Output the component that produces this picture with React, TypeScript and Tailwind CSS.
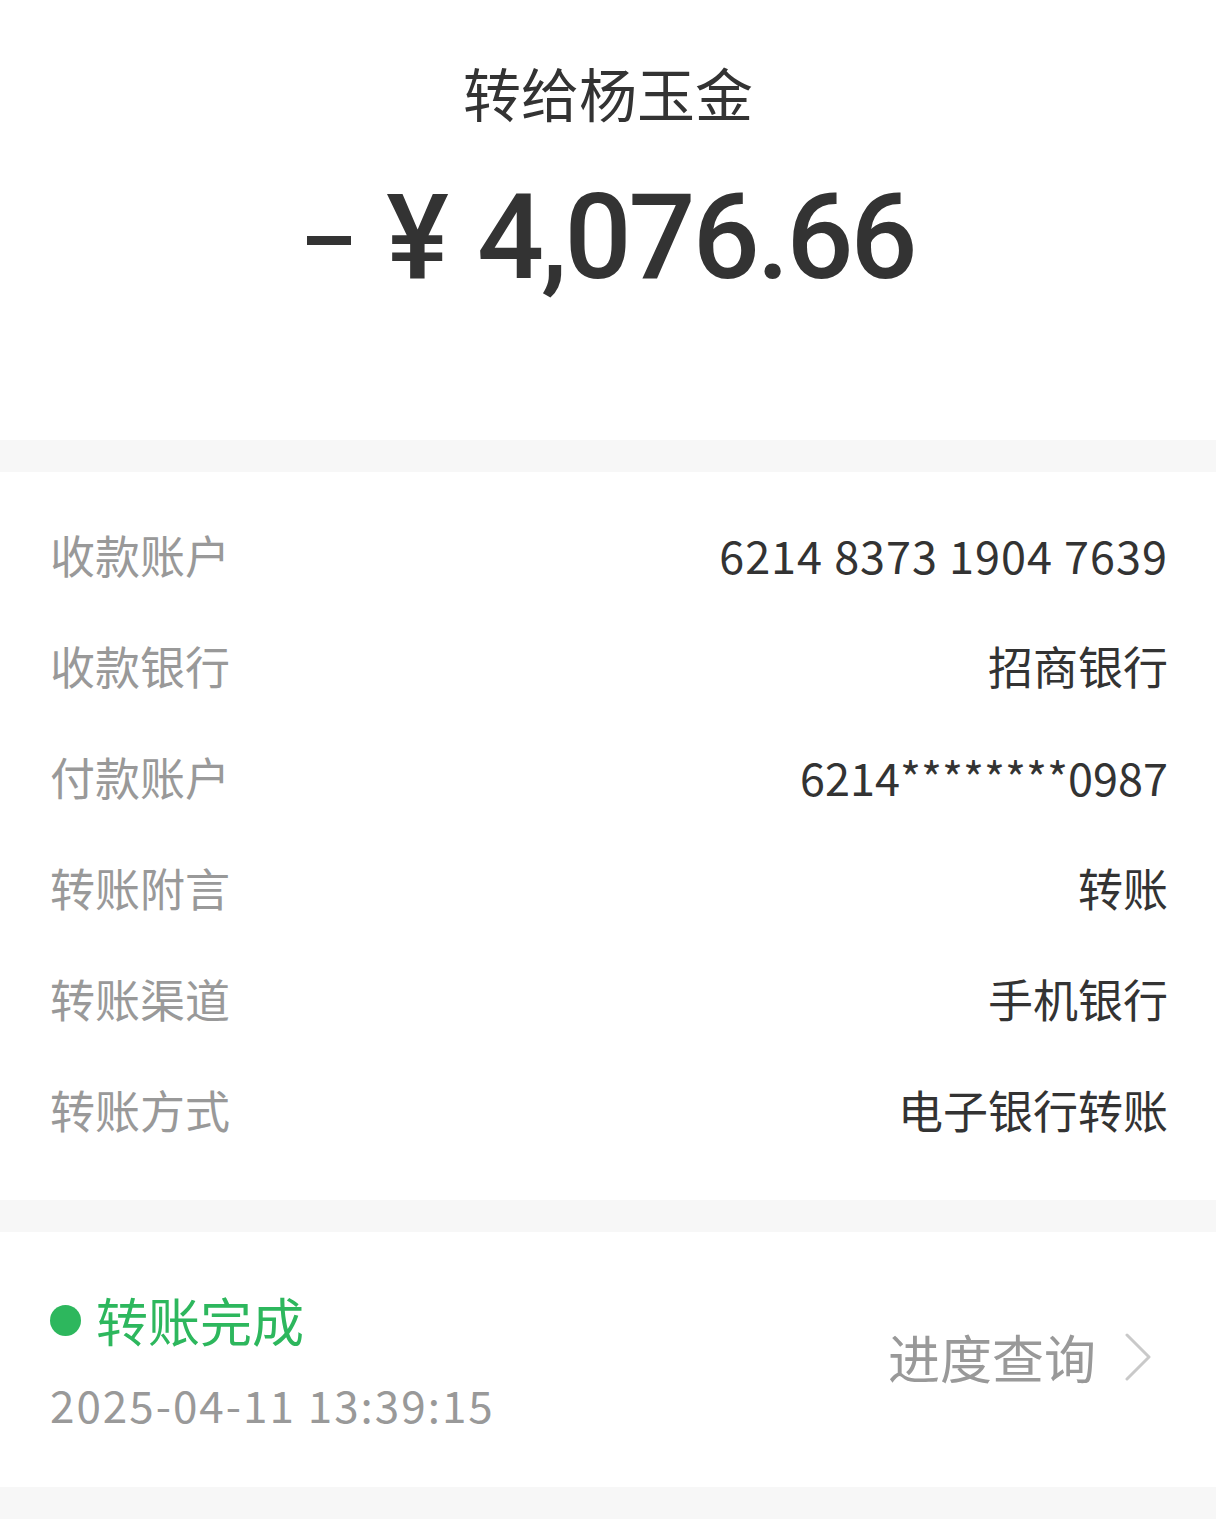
const rows = [
  { label: "收款账户", value: "6214 8373 1904 7639", numeric: true },
  { label: "收款银行", value: "招商银行" },
  { label: "付款账户", value: "6214********0987" },
  { label: "转账附言", value: "转账" },
  { label: "转账渠道", value: "手机银行" },
  { label: "转账方式", value: "电子银行转账" },
];

const cjk = "font-['Noto_Sans_CJK_SC',sans-serif]";

function ChevronRight() {
  return (
    <svg width="28" height="48" viewBox="0 0 28 48" fill="none">
      <path
        d="M3 2 L25 24 L3 46"
        stroke="#c9c9c9"
        strokeWidth="3"
        strokeLinecap="round"
        strokeLinejoin="round"
      />
    </svg>
  );
}

export default function App() {
  return (
    <div className={`min-h-[1526px] w-[1216px] bg-white ${cjk}`}>
      {/* header */}
      <section className="flex h-[440px] flex-col items-center bg-white pt-[57px]">
        <h1 className="text-[58px] leading-[70px] font-normal text-[#333333]">
          转给杨玉金
        </h1>
        <div className="ml-[6px] mt-[61px] flex h-[100px] items-center font-['Roboto',sans-serif] text-[118px] font-medium leading-none text-[#333333]">
          <span className="mr-[35px] mt-[4px] block h-[9px] w-[44px] bg-[#333333]" />
          <span className="mr-[30px] tracking-[-2px]">¥</span>
          <span className="tracking-[-3px]">4,076.66</span>
        </div>
      </section>

      <div className="h-[32px] bg-[#f7f7f7]" />

      {/* details */}
      <section className="px-[48px] pb-[35px] pl-[50px] pt-[27px]">
        {rows.map((row) => (
          <div
            key={row.label}
            className="flex h-[111px] items-center justify-between text-[45px]"
          >
            <span className="text-[#999999]">{row.label}</span>
            <span
              className={
                row.numeric
                  ? "tracking-[1px] text-[#333333]"
                  : "text-[#333333]"
              }
            >
              {row.value}
            </span>
          </div>
        ))}
      </section>

      <div className="h-[32px] bg-[#f7f7f7]" />

      {/* status */}
      <section className="flex h-[255px] justify-between pl-[50px] pr-[64px]">
        <div className="flex flex-col pt-[58px]">
          <div className="flex h-[60px] items-center">
            <span className="mr-[15px] h-[31px] w-[31px] rounded-full bg-[#2db75d]" />
            <span className="text-[52px] text-[#2db75d]">转账完成</span>
          </div>
          <div className="mt-[26px] flex h-[56px] items-center text-[44px] tracking-[2px] text-[#999999]">
            2025-04-11 13:39:15
          </div>
        </div>
        <div className="mb-[6px] flex items-center gap-[28px] self-center">
          <span className="text-[52px] text-[#999999]">进度查询</span>
          <ChevronRight />
        </div>
      </section>

      <div className="h-[32px] bg-[#f7f7f7]" />
    </div>
  );
}
